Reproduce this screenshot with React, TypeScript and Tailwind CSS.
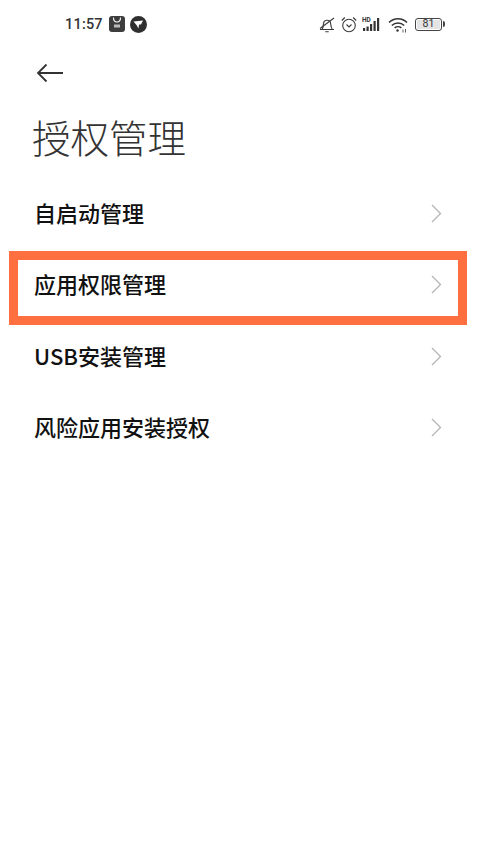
const rows = ['自启动管理', '应用权限管理', 'USB安装管理', '风险应用安装授权'];

function StatusBar() {
  return (
    <div className="flex h-[48px] items-center justify-between pl-[65px] pr-[32px] text-[#333]">
      <div className="flex items-center">
        <span className="pt-[2px] text-[14.500px] font-medium font-['Roboto',sans-serif] tracking-[0.2px]">11:57</span>
        <svg className="ml-[6px]" width="16" height="16" viewBox="0 0 16 16">
          <rect x="0" y="0" width="16" height="16" rx="3" fill="#3d3d3d" />
          <path d="M4.500 1.500c0 3.500 1.500 4.500 3.500 4.500s3.500-1 3.500-4.500" fill="none" stroke="#fff" strokeWidth="1.100" />
          <rect x="5" y="8.500" width="6" height="3" fill="#bbb" />
        </svg>
        <svg className="ml-[5px]" width="17" height="17" viewBox="0 0 17 17">
          <circle cx="8.500" cy="8.500" r="8.500" fill="#2f2f2f" />
          <path d="M3.500 5.500 L13 4.500 L11 8.500 L9 8.500 L8.500 12.500 L6.500 9 Z" fill="#fff" />
        </svg>
      </div>
      <div className="flex items-center">
        <svg width="16" height="17" viewBox="0 0 16 17" fill="none" stroke="#3a3a3a" strokeWidth="1.100">
          <path d="M1 13.500h14M3 13.500c1.200-1.700 1.300-4 1.500-6a3.600 3.600 0 0 1 7-.8c.3 2.500.4 5 1.800 6.800M6.300 15.800h3.400" />
          <path d="M1 12.500 15 2" />
        </svg>
        <svg className="ml-[6px]" width="16" height="17" viewBox="0 0 16 17" fill="none" stroke="#3a3a3a" strokeWidth="1.100">
          <circle cx="8" cy="9.500" r="6.300" />
          <path d="M5.500 8.500 8 11l2.500-2.500M.8 4.500l3-3M15.200 4.500l-3-3" />
        </svg>
        <svg className="ml-[5px]" width="19" height="17" viewBox="0 0 19 17">
          <text x="0" y="6" fontSize="6.500" fontWeight="700" fill="#333" fontFamily="Roboto, sans-serif">HD</text>
          <rect x="1" y="12" width="2.200" height="3" fill="#333" />
          <rect x="4.500" y="10.500" width="2.200" height="4.500" fill="#333" />
          <rect x="8" y="8" width="2.200" height="7" fill="#333" />
          <rect x="11.500" y="5" width="2.200" height="10" fill="#333" />
          <rect x="15" y="2" width="2.200" height="13" fill="#333" />
        </svg>
        <svg className="ml-[7px]" width="20" height="17" viewBox="0 0 20 17" fill="none" stroke="#333" strokeWidth="1.600">
          <path d="M1 6.500c5-5 13-5 18 0M3.800 9.500c3.500-3.300 8.900-3.300 12.400 0M6.600 12c1.900-1.700 4.900-1.700 6.800 0" />
          <circle cx="9.500" cy="14.500" r="1.200" fill="#333" stroke="none" />
          <path d="M15 13.500v3M17.500 13v3.500" strokeWidth="0.800" />
        </svg>
        <div className="ml-[7px] flex items-center">
          <div className="flex h-[13px] w-[27px] items-center justify-center rounded-[3px] border border-[#444] text-[10.500px] leading-none font-['Roboto',sans-serif] text-[#333]">
            <span className="flex h-[9px] w-[23px] items-center justify-center rounded-[1px] bg-[#e4e4e4]">81</span>
          </div>
          <div className="ml-[1px] h-[6px] w-[2px] rounded-r bg-[#444]" />
        </div>
      </div>
    </div>
  );
}

export default function App() {
  return (
    <div className="h-[843px] w-[477px] overflow-hidden bg-white font-['Noto_Sans_CJK_SC',sans-serif]">
      <StatusBar />
      <div className="pl-[36px] pt-[13px]">
        <svg className="block" width="28" height="24" viewBox="0 0 28 24" fill="none" stroke="#333" strokeWidth="1.800">
          <path d="M27 12H2M10.500 3.500 2 12l8.500 8.500" />
        </svg>
      </div>
      <h1 className="mt-[23px] pl-[32px] text-[38.500px] leading-[56px] font-light text-[#333]">授权管理</h1>
      <div className="mt-[14px]">
        {rows.map((label, i) => (
          <div key={label} className="relative flex h-[71.300px] items-center justify-between pl-[34px] pr-[35px]">
            <span className="pb-[2px] text-[22px] font-medium text-[#111]">{label}</span>
            <svg width="11" height="19" viewBox="0 0 11 19" fill="none" stroke="#b5b5b5" strokeWidth="1.300">
              <path d="M1 1l8.500 8.500L1 18" />
            </svg>
            {i === 1 && (
              <div className="absolute left-[8.500px] top-[2px] h-[74px] w-[458.500px] border-[9px] border-[#ff6f3f]" />
            )}
          </div>
        ))}
      </div>
    </div>
  );
}
